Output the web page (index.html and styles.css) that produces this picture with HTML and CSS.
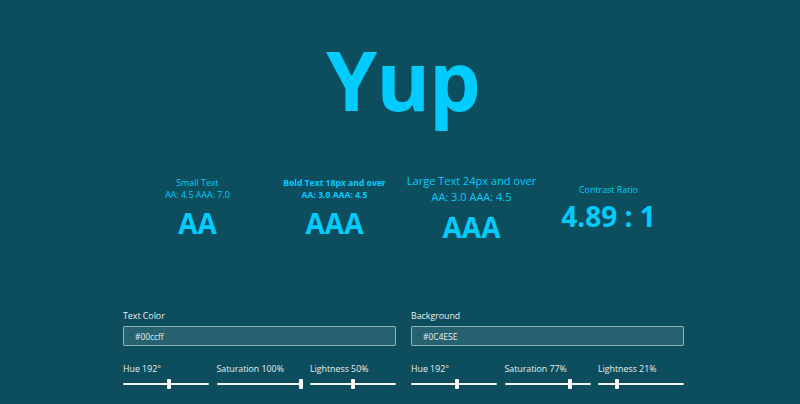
FILE: index.html
```html
<!DOCTYPE html>
<html lang="en">
<head>
<meta charset="utf-8">
<title>Yup</title>
<link rel="stylesheet" href="styles.css">
</head>
<body>
<main class="page">
  <h1 class="title">Yup</h1>

  <section class="stats">
    <div class="stat">
      <div class="stat-label">Small Text</div>
      <div class="stat-label">AA: 4.5 AAA: 7.0</div>
      <div class="stat-value">AA</div>
    </div>
    <div class="stat">
      <div class="stat-label bold">Bold Text 18px and over</div>
      <div class="stat-label bold">AA: 3.0 AAA: 4.5</div>
      <div class="stat-value">AAA</div>
    </div>
    <div class="stat">
      <div class="stat-label large">Large Text 24px and over</div>
      <div class="stat-label large">AA: 3.0 AAA: 4.5</div>
      <div class="stat-value">AAA</div>
    </div>
    <div class="stat">
      <div class="stat-label">Contrast Ratio</div>
      <div class="stat-value ratio">4.89 : 1</div>
    </div>
  </section>

  <section class="controls">
    <div class="color-group">
      <label class="field-label" for="fg">Text Color</label>
      <input class="hex" id="fg" type="text" value="#00ccff">
      <div class="sliders">
        <div class="slider">
          <span class="slider-label">Hue 192°</span>
          <input type="range" min="0" max="360" value="192">
        </div>
        <div class="slider">
          <span class="slider-label">Saturation 100%</span>
          <input type="range" min="0" max="100" value="100">
        </div>
        <div class="slider">
          <span class="slider-label">Lightness 50%</span>
          <input type="range" min="0" max="100" value="50">
        </div>
      </div>
    </div>
    <div class="color-group">
      <label class="field-label" for="bg">Background</label>
      <input class="hex" id="bg" type="text" value="#0C4E5E">
      <div class="sliders">
        <div class="slider">
          <span class="slider-label">Hue 192°</span>
          <input type="range" min="0" max="360" value="192">
        </div>
        <div class="slider">
          <span class="slider-label">Saturation 77%</span>
          <input type="range" min="0" max="100" value="77">
        </div>
        <div class="slider">
          <span class="slider-label">Lightness 21%</span>
          <input type="range" min="0" max="100" value="21">
        </div>
      </div>
    </div>
  </section>
</main>
</body>
</html>
```

FILE: styles.css
```css
html, body {
  margin: 0;
  padding: 0;
  background: #0C4E5E;
  height: 100%;
  overflow: hidden;
}

body {
  font-family: "Open Sans", "Noto Sans", sans-serif;
  color: #00ccff;
}

.page {
  width: 560px;
  margin: 0 auto;
  padding-left: 6px;
}

.title {
  margin: 38px 0 0;
  font-size: 82px;
  line-height: 82px;
  font-weight: 700;
  text-align: center;
  color: #00ccff;
  letter-spacing: -1px;
}

.stats {
  display: grid;
  grid-template-columns: repeat(4, 137px);
  justify-content: center;
  align-items: center;
  margin-top: 53px;
}

.stat {
  display: flex;
  flex-direction: column;
  align-items: center;
  text-align: center;
}

.stat-label {
  font-size: 8.9px;
  line-height: 12px;
  white-space: nowrap;
}

.stat-label.bold {
  font-weight: 700;
  font-size: 8.6px;
}

.stat-label.large {
  font-size: 11px;
  line-height: 16px;
}

.stat-value {
  margin-top: 3px;
  font-size: 28px;
  line-height: 38px;
  font-weight: 700;
}

.stat-value.ratio {
  margin-top: 1px;
}

.controls {
  display: grid;
  grid-template-columns: 273px 273px;
  column-gap: 15px;
  margin-top: 64px;
}

.color-group {
  display: flex;
  flex-direction: column;
}

.field-label {
  font-size: 8.8px;
  line-height: 12px;
  color: #e6eef0;
}

.hex {
  box-sizing: border-box;
  margin: 4px 0 0;
  height: 20px;
  width: 100%;
  padding: 0 11px;
  font-family: "Open Sans", "Noto Sans", sans-serif;
  font-size: 8.4px;
  color: #e6eef0;
  background: rgba(255, 255, 255, 0.11);
  border: 1px solid rgba(255, 255, 255, 0.52);
  border-radius: 2px;
  outline: none;
}

.sliders {
  display: grid;
  grid-template-columns: repeat(3, 1fr);
  column-gap: 7.5px;
  margin-top: 17px;
}

.slider {
  display: flex;
  flex-direction: column;
}

.slider-label {
  font-size: 8.8px;
  line-height: 12px;
  color: #e6eef0;
  white-space: nowrap;
}

.slider input[type="range"] {
  -webkit-appearance: none;
  appearance: none;
  width: 100%;
  height: 10px;
  margin: 4px 0 0;
  padding: 0;
  background: transparent;
}

.slider input[type="range"]::-webkit-slider-runnable-track {
  height: 2px;
  background: #f2f6f7;
  border-radius: 1px;
}

.slider input[type="range"]::-webkit-slider-thumb {
  -webkit-appearance: none;
  appearance: none;
  width: 4px;
  height: 10px;
  margin-top: -4px;
  background: #ffffff;
  border: none;
  border-radius: 1px;
}

.slider input[type="range"]::-moz-range-track {
  height: 2px;
  background: #f2f6f7;
}

.slider input[type="range"]::-moz-range-thumb {
  width: 4px;
  height: 10px;
  background: #ffffff;
  border: none;
  border-radius: 1px;
}
```
